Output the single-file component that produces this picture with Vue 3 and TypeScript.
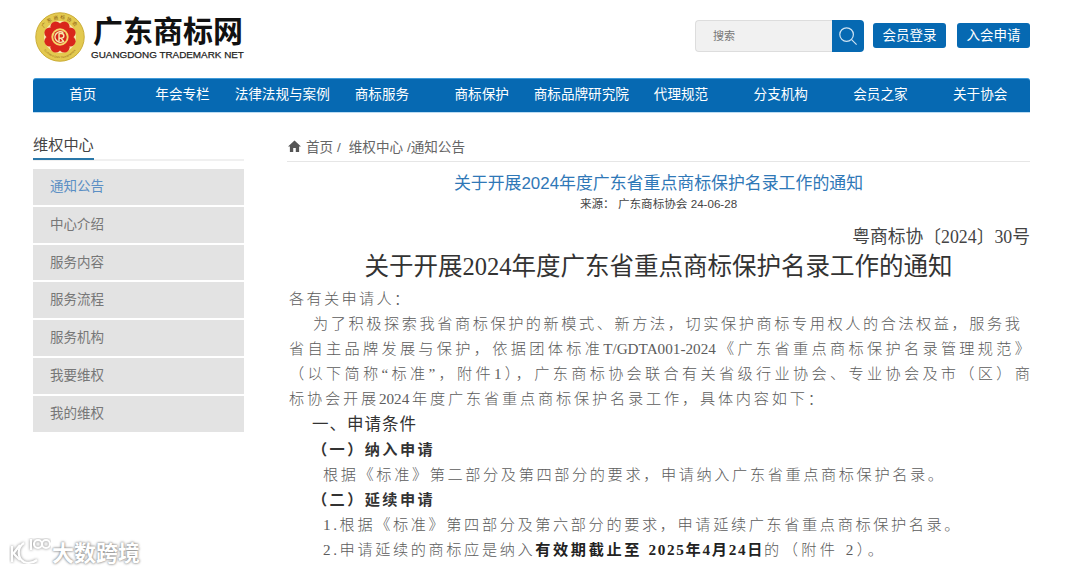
<template>
  <div class="page">
    <header class="header">
      <div class="brand">
        <svg class="logo" viewBox="0 0 52 52" width="50" height="50">
          <defs>
            <path id="ringTop" d="M6.5 29a19.6 19.6 0 1 1 39 0" />
            <path id="ringBottom" d="M5 27a21 21 0 0 0 42 0" />
          </defs>
          <circle cx="26" cy="26" r="25.2" fill="#e3c94f" stroke="#c9ab35" />
          <circle cx="26" cy="26" r="16.6" fill="#f6ecb0" />
          <g fill="#d9261c">
            <circle v-for="p in petals" :key="p.x" :cx="p.x" :cy="p.y" r="5.6" />
            <circle cx="26" cy="26" r="12.5" />
          </g>
          <circle cx="26" cy="26" r="9" fill="#f4d86a" />
          <circle cx="26" cy="26" r="7" fill="#d9261c" />
          <path d="M29.5 21.5a5.5 5.5 0 1 0 0 9M25 22v8.5M25 22.4h2.6a2.4 2.4 0 0 1 0 4.8H25M27 27.2l3.2 4" fill="none" stroke="#f6ecb0" stroke-width="1.5" />
          <text class="ring-text" fill="#8a5a10"><textPath href="#ringTop" startOffset="50%" text-anchor="middle">广东商标协会</textPath></text>
          <text class="ring-text small" fill="#8a5a10"><textPath href="#ringBottom" startOffset="50%" text-anchor="middle">GUANGDONG TRADEMARK</textPath></text>
        </svg>
        <div class="brand-text">
          <div class="brand-name">广东商标网</div>
          <div class="brand-sub">GUANGDONG TRADEMARK NET</div>
        </div>
      </div>
      <div class="tools">
        <div class="search">
          <div class="search-input">搜索</div>
          <div class="search-btn">
            <svg viewBox="0 0 20 20" width="20" height="20" fill="none" stroke="#cfe3f3" stroke-width="1.2">
              <circle cx="8.6" cy="8.6" r="6.8" />
              <path d="M13.6 13.6l5 5" />
            </svg>
          </div>
        </div>
        <a class="tool-btn">会员登录</a>
        <a class="tool-btn">入会申请</a>
      </div>
    </header>

    <nav class="nav">
      <a v-for="item in navItems" :key="item">{{ item }}</a>
    </nav>

    <div class="content">
      <aside class="side">
        <div class="side-title"><span>维权中心</span></div>
        <ul class="side-menu">
          <li v-for="(item, i) in sideItems" :key="item" :class="{ active: i === 0 }">{{ item }}</li>
        </ul>
      </aside>

      <main class="main">
        <div class="crumb">
          <svg viewBox="0 0 14 13" width="13" height="12" fill="#555">
            <path d="M7 .5L0 7h2v6h3.600V8.800h2.800V13H12V7h2z" />
          </svg>
          <span>首页 /</span>
          <span class="crumb-sec">维权中心 /通知公告</span>
        </div>
        <h1 class="title">关于开展2024年度广东省重点商标保护名录工作的通知</h1>
        <div class="source">来源： 广东商标协会 24-06-28</div>

        <div class="article">
          <div class="doc-no">粤商标协〔2024〕30号</div>
          <h2 class="doc-title">关于开展2024年度广东省重点商标保护名录工作的通知</h2>
          <p class="line intro">各有关申请人：</p>
          <p class="line just first">为了积极探索我省商标保护的新模式、新方法，切实保护商标专用权人的合法权益，服务我</p>
          <p class="line just">省自主品牌发展与保护，依据团体标准T/GDTA001-2024《广东省重点商标保护名录管理规范》</p>
          <p class="line just">（以下简称“标准”，附件1），广东商标协会联合有关省级行业协会、专业协会及市（区）商</p>
          <p class="line just last">标协会开展2024年度广东省重点商标保护名录工作，具体内容如下：</p>
          <p class="line head">一、申请条件</p>
          <p class="line sub">（一）纳入申请</p>
          <p class="line item">根据《标准》第二部分及第四部分的要求，申请纳入广东省重点商标保护名录。</p>
          <p class="line sub">（二）延续申请</p>
          <p class="line item">1.根据《标准》第四部分及第六部分的要求，申请延续广东省重点商标保护名录。</p>
          <p class="line item">2.申请延续的商标应是纳入<b>有效期截止至 <span class="date">2025年4月24日</span></b><span class="tail">的（附件 2）。</span></p>
        </div>
      </main>
    </div>

    <div class="watermark">
      <svg viewBox="0 0 42 26" width="42" height="26" fill="none" stroke="#fff" stroke-width="2.2">
        <g class="wm-shadow">
          <path d="M3 8v16M4 16l7-9M5 16l6 6" />
          <path d="M15 5C8 9 8 20 15 24c4 1.500 9 1 13-2" />
          <path d="M22 1v11" />
          <circle cx="29" cy="6" r="4" />
          <circle cx="37" cy="6" r="4" />
        </g>
      </svg>
      <span>大数跨境</span>
    </div>
  </div>
</template>

<script setup lang="ts">
const navItems: string[] = [
  "首页",
  "年会专栏",
  "法律法规与案例",
  "商标服务",
  "商标保护",
  "商标品牌研究院",
  "代理规范",
  "分支机构",
  "会员之家",
  "关于协会",
];

const sideItems: string[] = ["通知公告", "中心介绍", "服务内容", "服务流程", "服务机构", "我要维权", "我的维权"];

// 徽标外圈的花瓣位置
const petals = Array.from({ length: 8 }, (_, i) => {
  const a = (i * Math.PI) / 4 + Math.PI / 8;
  return { x: 26 + 11.5 * Math.cos(a), y: 26 + 11.5 * Math.sin(a) };
});
</script>

<style>
html,
body {
  margin: 0;
  background: #fff;
  overflow: hidden;
}
</style>

<style scoped>
.page {
  position: relative;
  width: 1080px;
  height: 570px;
  overflow: hidden;
  padding: 0 50px 0 33px;
  box-sizing: border-box;
  font-family: "Liberation Sans", "Noto Sans CJK SC", sans-serif;
  color: #555;
}

.header {
  display: flex;
  justify-content: space-between;
  align-items: flex-start;
  height: 78px;
}

.brand {
  display: flex;
  align-items: flex-start;
  padding-top: 12px;
  padding-left: 2px;
}

.logo {
  flex: none;
}

.ring-text {
  font-size: 5px;
  font-family: "Noto Sans CJK SC", sans-serif;
  letter-spacing: 1.6px;
}

.ring-text.small {
  font-size: 2.6px;
  letter-spacing: 0.2px;
  font-family: "Liberation Sans", sans-serif;
}

.brand-text {
  margin-left: 6px;
  margin-top: -1px;
}

.brand-name {
  margin-left: 2px;
  font-family: "Noto Sans CJK SC", sans-serif;
  font-size: 30px;
  font-weight: 700;
  line-height: 36px;
  letter-spacing: 0;
  color: #111;
}

.brand-sub {
  margin-top: 1px;
  font-size: 9.9px;
  line-height: 13px;
  font-weight: 400;
  white-space: nowrap;
  color: #222;
  -webkit-text-stroke: 0.25px #222;
}

.tools {
  display: flex;
  align-items: center;
  padding-top: 20px;
  gap: 9px;
}

.search {
  display: flex;
  width: 169px;
  height: 32px;
}

.search-input {
  flex: 1;
  box-sizing: border-box;
  padding-left: 17px;
  background: #f1f1f1;
  border: 1px solid #ddd;
  border-right: 0;
  border-radius: 4px 0 0 4px;
  font-size: 11px;
  line-height: 30px;
  color: #777;
}

.search-btn {
  display: flex;
  width: 32px;
  align-items: center;
  justify-content: center;
  background: #0669b2;
  border-radius: 0 4px 4px 0;
}

.tool-btn {
  width: 73px;
  height: 25px;
  margin-bottom: 1px;
  background: #0669b2;
  border-radius: 3px;
  font-size: 13.5px;
  line-height: 25px;
  text-align: center;
  color: #fff;
}

.tool-btn:last-child {
  margin-left: 2px;
}

.nav {
  display: grid;
  grid-template-columns: repeat(10, 1fr);
  height: 34.5px;
  box-sizing: border-box;
  background: #0669b2;
  border-top: 1px solid #3f9ad8;
  border-bottom: 1px solid #bcdcf2;
  border-radius: 3px 3px 0 0;
}

.nav a {
  font-size: 13.6px;
  line-height: 32.5px;
  text-align: center;
  color: #fff;
  white-space: nowrap;
}

.content {
  display: flex;
  gap: 43px;
  padding-top: 20.5px;
}

.side {
  flex: none;
  width: 211px;
}

.side-title {
  height: 25.5px;
  border-bottom: 2px solid #f0f0f0;
}

.side-title span {
  display: inline-block;
  height: 25px;
  border-bottom: 2px solid #2a77a8;
  font-size: 15.2px;
  line-height: 24px;
  color: #444;
}

.side-menu {
  display: flex;
  flex-direction: column;
  gap: 2px;
  margin: 8.5px 0 0;
  padding: 0;
  list-style: none;
}

.side-menu li {
  height: 35.8px;
  padding-left: 17px;
  background: #e3e3e3;
  font-size: 13.5px;
  line-height: 35px;
  color: #777;
}

.side-menu li.active {
  color: #5b8fc4;
}

.main {
  flex: 1;
  min-width: 0;
}

.crumb {
  display: flex;
  align-items: center;
  box-sizing: border-box;
  height: 29px;
  padding: 0 0 3px 1px;
  border-bottom: 1px solid #e6e6e6;
  font-size: 13.6px;
  color: #666;
}

.crumb svg {
  margin-right: 5px;
}

.crumb-sec {
  margin-left: 8px;
}

.title {
  margin: 11.5px 0 0;
  font-size: 16.9px;
  font-weight: 400;
  line-height: 19px;
  text-align: center;
  color: #2f78b7;
}

.source {
  margin-top: 2px;
  font-size: 11.6px;
  line-height: 17px;
  text-align: center;
  color: #444;
}

.article {
  padding-top: 15px;
  font-family: "Liberation Serif", "Noto Sans CJK SC", serif;
}

.doc-no {
  font-size: 17.8px;
  line-height: 20px;
  text-align: right;
  color: #444;
}

.doc-title {
  margin: 3px 0 0;
  padding-bottom: 3px;
  font-size: 24.5px;
  font-weight: 400;
  line-height: 33px;
  text-align: center;
  color: #333;
}

.line {
  margin: 0;
  height: 25.2px;
  padding-left: 2px;
  font-size: 15.2px;
  line-height: 25.2px;
  letter-spacing: 2.6px;
  font-weight: 300;
  white-space: nowrap;
  color: #5c5c5c;
}

.line.intro {
  letter-spacing: 2.3px;
}

.line.just {
  white-space: normal;
  text-align: justify;
  text-align-last: justify;
  letter-spacing: 0;
}

.line.first {
  padding-left: 26px;
  padding-right: 10px;
}

.line.last {
  width: 534px;
}

.line.head {
  padding-left: 25px;
  font-size: 16.5px;
  line-height: 27px;
  letter-spacing: 1px;
  font-weight: 400;
  color: #333;
}

.line.sub {
  padding-left: 25px;
  font-weight: 700;
  letter-spacing: 2.4px;
  color: #333;
}

.line.item {
  padding-left: 36px;
}

.line b {
  font-weight: 700;
  color: #222;
}

.line .date {
  letter-spacing: 1.7px;
}

.line .tail {
  letter-spacing: 3.4px;
}

.watermark {
  position: absolute;
  left: 9px;
  top: 535px;
  display: flex;
  align-items: center;
  gap: 1px;
  font-family: "Noto Sans CJK SC", sans-serif;
  font-size: 22px;
  font-weight: 700;
  color: #fff;
  text-shadow: 0 0 3px #888, 0 0 2px #999;
}

.wm-shadow {
  filter: drop-shadow(0 0 1.5px #888);
}
</style>
